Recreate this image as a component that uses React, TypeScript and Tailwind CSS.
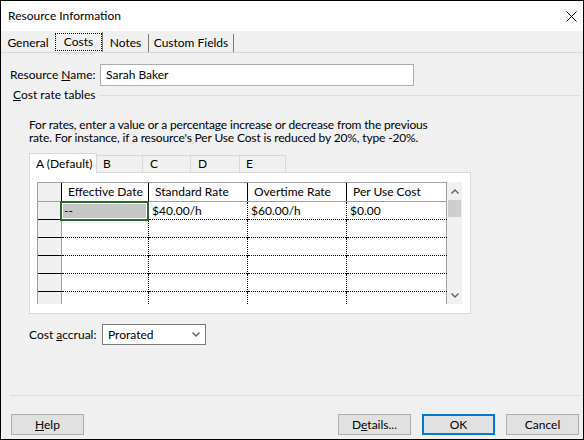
import React from "react";

const columns = [
  { label: "Effective Date", head: "w-[87px] border-r-black", cell: "w-[87px] border-r border-dotted border-black" },
  { label: "Standard Rate", head: "w-[99px] border-r-black", cell: "w-[99px] border-r border-dotted border-black" },
  { label: "Overtime Rate", head: "w-[99px] border-r-black", cell: "w-[99px] border-r border-dotted border-black" },
  { label: "Per Use Cost", head: "w-[100px] border-r-black", cell: "w-[100px]" },
];

const rows = [
  ["--", "$40.00/h", "$60.00/h", "$0.00"],
  ["", "", "", ""],
  ["", "", "", ""],
  ["", "", "", ""],
  ["", "", "", ""],
  ["", "", "", ""],
];

function Chevron({ up, className }: { up?: boolean; className?: string }) {
  return (
    <svg width="8" height="5" viewBox="0 0 8 5" className={className}>
      <polyline
        points={up ? "0.5,4.5 4,1 7.5,4.5" : "0.5,0.5 4,4 7.5,0.5"}
        fill="none"
        stroke="#606060"
        strokeWidth="1.4"
      />
    </svg>
  );
}

function Button({ children, primary }: { children: React.ReactNode; primary?: boolean }) {
  return (
    <div
      className={
        primary
          ? "w-[73px] h-[21px] bg-[#e1e1e1] border-2 border-[#0078d7] flex items-center justify-center"
          : "w-[73px] h-[21px] bg-[#e1e1e1] border border-[#adadad] flex items-center justify-center"
      }
    >
      {children}
    </div>
  );
}

function RateGrid() {
  return (
    <div className="flex h-[122px] w-[426px]">
      <div className="w-[410px] h-[122px] border-t border-l border-[#a0a0a0] overflow-hidden flex flex-col">
        {/* header */}
        <div className="flex h-[19px] shrink-0 border-b border-[#a0a0a0] bg-white">
          <div className="w-[24px] h-full bg-[#f0f0f0] border-r border-black" />
          {columns.map((c) => (
            <div key={c.label} className={`${c.head} h-full border-r flex items-center pl-[6px]`}>
              {c.label}
            </div>
          ))}
        </div>
        {rows.map((r, i) => (
          <div key={i} className="flex h-[18px] shrink-0 bg-white">
            <div className="w-[24px] h-full shrink-0 bg-[#f0f0f0] border-r border-b border-r-[#a0a0a0] border-b-black" />
            {columns.map((c, j) => (
              <div key={c.label} className={`${c.cell} h-full shrink-0 relative`}>
                <div className="absolute left-0 right-0 bottom-0 border-b border-dotted border-black" />
                {i === 0 && j === 0 ? (
                  <div className="absolute -left-[2px] -top-[1px] w-[89px] h-[20px] border-2 border-[#2b6a2f] p-px bg-white z-10">
                    <div className="w-full h-full bg-[#c6c6c6] flex items-center pl-[1px]">{r[j]}</div>
                  </div>
                ) : (
                  <div className="h-[17px] flex items-center pl-[3px]">{r[j]}</div>
                )}
              </div>
            ))}
          </div>
        ))}
      </div>
      <div className="w-[16px] h-[122px] bg-[#f0f0f0] flex flex-col border-l border-[#a0a0a0] -ml-px">
        <div className="h-[18px] flex items-center justify-center">
          <Chevron up />
        </div>
        <div className="h-[17px] mx-[1px] bg-[#cdcdcd]" />
        <div className="mt-auto h-[17px] flex items-center justify-center">
          <Chevron />
        </div>
      </div>
    </div>
  );
}

export default function App() {
  return (
    <div className="w-[584px] h-[440px] border border-black bg-[#f0f0f0] flex flex-col font-['Lato',sans-serif] text-[12px] text-black leading-none whitespace-nowrap overflow-hidden">
      {/* title bar */}
      <div className="h-[30px] shrink-0 bg-white flex items-center justify-between pl-[7px] pr-[6px]">
        <span>Resource Information</span>
        <svg width="11" height="11" viewBox="0 0 11 11">
          <path d="M0.5 0.5 L10.5 10.5 M10.5 0.5 L0.5 10.5" stroke="#000" strokeWidth="1" />
        </svg>
      </div>

      {/* tabs */}
      <div className="h-[22px] shrink-0 border-b border-[#d9d9d9] flex items-end pl-[1px]">
        <div className="w-[52px] h-[18px] flex items-center justify-center">General</div>
        <div className="w-[49px] h-[20px] border-r border-[#7a7a7a] pt-px pb-px pl-px self-start mt-px">
          <div className="w-full h-full border border-dotted border-black flex items-center justify-center">Costs</div>
        </div>
        <div className="w-[46px] h-[18px] border-r border-[#7a7a7a] flex items-center justify-center">Notes</div>
        <div className="w-[85px] h-[18px] border-r border-[#7a7a7a] flex items-center justify-center">Custom Fields</div>
      </div>

      {/* content */}
      <div className="flex-1 flex flex-col">
        <div className="mt-[11px] h-[22px] flex items-center">
          <div className="w-[99px] pl-[9px]">
            Resource <span className="underline">N</span>ame:
          </div>
          <div className="w-[314px] h-[22px] border border-[#acacac] bg-white flex items-center pl-[5px]">
            Sarah Baker
          </div>
        </div>

        <div className="mt-[2px] h-[14px] flex items-center pl-[12px]">
          <span>
            <span className="underline">C</span>ost rate tables
          </span>
          <div className="flex-1 ml-[4px] mr-[3px] h-px bg-[#dcdcdc]" />
        </div>

        <div className="mt-[16px] pl-[28px] leading-[13px] tracking-[-0.15px]">
          <div>For rates, enter a value or a percentage increase or decrease from the previous</div>
          <div>rate. For instance, if a resource's Per Use Cost is reduced by 20%, type -20%.</div>
        </div>

        {/* rate table tabs */}
        <div className="mt-[9px] ml-[28px] h-[19px] flex items-end">
          <div className="w-[68px] h-[20px] -mb-px relative z-10 bg-white border border-b-0 border-[#d9d9d9] flex items-center pl-[6px]">
            A (Default)
          </div>
          <div className="w-[46px] h-[17px] border-t border-r border-[#d9d9d9] flex items-center pl-[6px]">B</div>
          <div className="w-[48px] h-[17px] border-t border-r border-[#d9d9d9] flex items-center pl-[7px]">C</div>
          <div className="w-[49px] h-[17px] border-t border-r border-[#d9d9d9] flex items-center pl-[7px]">D</div>
          <div className="w-[46px] h-[17px] border-t border-r border-[#d9d9d9] flex items-center pl-[6px]">E</div>
        </div>
        <div className="ml-[28px] w-[442px] h-[142px] border border-[#d9d9d9] bg-white pt-[9px] pl-[7px]">
          <RateGrid />
        </div>

        <div className="mt-[10px] flex items-center pl-[28px]">
          <div className="w-[73px]">
            Cost <span className="underline">a</span>ccrual:
          </div>
          <div className="w-[104px] h-[21px] border border-[#7a7a7a] bg-white flex items-center justify-between pl-[5px] pr-[5px]">
            <span>Prorated</span>
            <Chevron />
          </div>
        </div>
      </div>

      {/* footer */}
      <div className="shrink-0">
        <div className="ml-[9px] mr-[3px] h-px bg-[#dcdcdc]" />
        <div className="mt-[18px] mb-[4px] h-[21px] flex pl-[10px] pr-[4px]">
          <Button>
            <span>
              <span className="underline">H</span>elp
            </span>
          </Button>
          <div className="ml-auto flex gap-[11px]">
            <Button>
              <span>
                D<span className="underline">e</span>tails...
              </span>
            </Button>
            <Button primary>OK</Button>
            <Button>Cancel</Button>
          </div>
        </div>
      </div>
    </div>
  );
}
